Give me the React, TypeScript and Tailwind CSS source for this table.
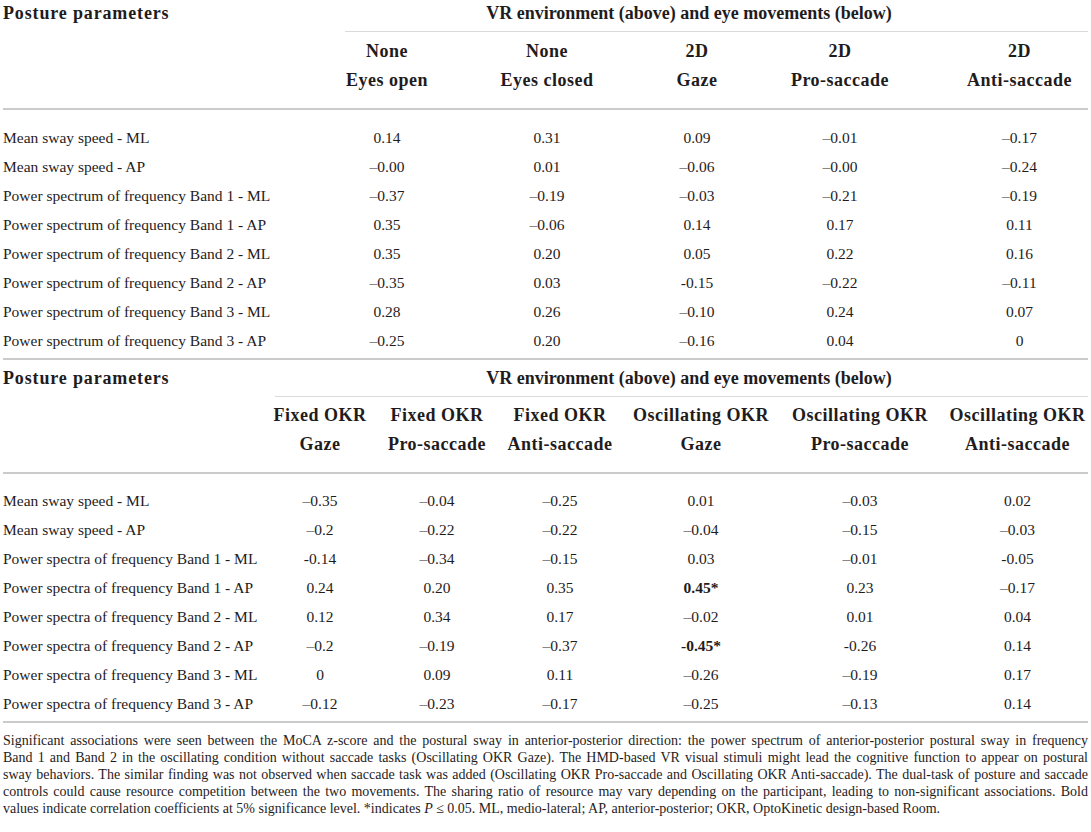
import React from "react";

type Cell = { v: string; b?: boolean };

const t1Cols = [
  ["None", "Eyes open"],
  ["None", "Eyes closed"],
  ["2D", "Gaze"],
  ["2D", "Pro-saccade"],
  ["2D", "Anti-saccade"],
];

const t1Rows: [string, string[]][] = [
  ["Mean sway speed - ML", ["0.14", "0.31", "0.09", "–0.01", "–0.17"]],
  ["Mean sway speed - AP", ["–0.00", "0.01", "–0.06", "–0.00", "–0.24"]],
  ["Power spectrum of frequency Band 1 - ML", ["–0.37", "–0.19", "–0.03", "–0.21", "–0.19"]],
  ["Power spectrum of frequency Band 1 - AP", ["0.35", "–0.06", "0.14", "0.17", "0.11"]],
  ["Power spectrum of frequency Band 2 - ML", ["0.35", "0.20", "0.05", "0.22", "0.16"]],
  ["Power spectrum of frequency Band 2 - AP", ["–0.35", "0.03", "-0.15", "–0.22", "–0.11"]],
  ["Power spectrum of frequency Band 3 - ML", ["0.28", "0.26", "–0.10", "0.24", "0.07"]],
  ["Power spectrum of frequency Band 3 - AP", ["–0.25", "0.20", "–0.16", "0.04", "0"]],
];

const t2Cols = [
  ["Fixed OKR", "Gaze"],
  ["Fixed OKR", "Pro-saccade"],
  ["Fixed OKR", "Anti-saccade"],
  ["Oscillating OKR", "Gaze"],
  ["Oscillating OKR", "Pro-saccade"],
  ["Oscillating OKR", "Anti-saccade"],
];

const t2Rows: [string, Cell[]][] = [
  ["Mean sway speed - ML", [{ v: "–0.35" }, { v: "–0.04" }, { v: "–0.25" }, { v: "0.01" }, { v: "–0.03" }, { v: "0.02" }]],
  ["Mean sway speed - AP", [{ v: "–0.2" }, { v: "–0.22" }, { v: "–0.22" }, { v: "–0.04" }, { v: "–0.15" }, { v: "–0.03" }]],
  ["Power spectra of frequency Band 1 - ML", [{ v: "-0.14" }, { v: "–0.34" }, { v: "–0.15" }, { v: "0.03" }, { v: "–0.01" }, { v: "-0.05" }]],
  ["Power spectra of frequency Band 1 - AP", [{ v: "0.24" }, { v: "0.20" }, { v: "0.35" }, { v: "0.45*", b: true }, { v: "0.23" }, { v: "–0.17" }]],
  ["Power spectra of frequency Band 2 - ML", [{ v: "0.12" }, { v: "0.34" }, { v: "0.17" }, { v: "–0.02" }, { v: "0.01" }, { v: "0.04" }]],
  ["Power spectra of frequency Band 2 - AP", [{ v: "–0.2" }, { v: "–0.19" }, { v: "–0.37" }, { v: "-0.45*", b: true }, { v: "-0.26" }, { v: "0.14" }]],
  ["Power spectra of frequency Band 3 - ML", [{ v: "0" }, { v: "0.09" }, { v: "0.11" }, { v: "–0.26" }, { v: "–0.19" }, { v: "0.17" }]],
  ["Power spectra of frequency Band 3 - AP", [{ v: "–0.12" }, { v: "–0.23" }, { v: "–0.17" }, { v: "–0.25" }, { v: "–0.13" }, { v: "0.14" }]],
];

function TitleRow({ lineOffset }: { lineOffset: "t1" | "t2" }) {
  return (
    <div>
      <div className="flex h-[31px] items-start">
        <div className="w-[287px] text-[18px] leading-[26px] font-bold tracking-[0.85px] whitespace-nowrap">
          Posture parameters
        </div>
        <div className="flex-1 text-center text-[18px] leading-[26px] font-bold whitespace-nowrap">
          VR environment (above) and eye movements (below)
        </div>
      </div>
      <div
        className={
          lineOffset === "t1"
            ? "ml-[342px] border-t border-[#dadada]"
            : "ml-[272px] border-t border-[#dadada]"
        }
      />
    </div>
  );
}

function HeadCell({ lines }: { lines: string[] }) {
  return (
    <div className="flex flex-col items-center text-[18px] leading-[29px] font-bold tracking-[0.5px] whitespace-nowrap">
      <div>{lines[0]}</div>
      <div>{lines[1]}</div>
    </div>
  );
}

export default function App() {
  return (
    <div
      className="w-[1091px] h-[832px] bg-white px-[3px] text-[#1f1c1d] overflow-hidden"
      style={{ fontFamily: '"Liberation Serif", "Times New Roman", serif' }}
    >
      {/* Table 1 */}
      <TitleRow lineOffset="t1" />
      <div className="grid grid-cols-[342px_84px_236px_64px_222px_1fr] pt-[5px] pb-[13px] border-b-2 border-[#cbcbcb]">
        <div />
        {t1Cols.map((c, i) => (
          <HeadCell key={i} lines={c} />
        ))}
      </div>
      <div className="pt-[13px] pb-[3px] border-b-2 border-[#cbcbcb]">
        {t1Rows.map(([label, vals], r) => (
          <div
            key={r}
            className="grid grid-cols-[342px_84px_236px_64px_222px_1fr] text-[15.5px] leading-[29px]"
          >
            <div className="whitespace-nowrap">{label}</div>
            {vals.map((v, i) => (
              <div key={i} className="text-center whitespace-nowrap">
                {v}
              </div>
            ))}
          </div>
        ))}
      </div>

      {/* Table 2 */}
      <div className="pt-[5px]">
        <TitleRow lineOffset="t2" />
      </div>
      <div className="grid grid-cols-[254px_126px_108px_138px_144px_174px_1fr] pt-[4px] pb-[13px] border-b-2 border-[#cbcbcb]">
        <div />
        {t2Cols.map((c, i) => (
          <HeadCell key={i} lines={c} />
        ))}
      </div>
      <div className="pt-[12px] pb-[3px] border-b-2 border-[#cbcbcb]">
        {t2Rows.map(([label, vals], r) => (
          <div
            key={r}
            className="grid grid-cols-[254px_126px_108px_138px_144px_174px_1fr] text-[15.5px] leading-[29px]"
          >
            <div className="whitespace-nowrap">{label}</div>
            {vals.map((c, i) => (
              <div
                key={i}
                className={c.b ? "text-center whitespace-nowrap font-bold" : "text-center whitespace-nowrap"}
              >
                {c.v}
              </div>
            ))}
          </div>
        ))}
      </div>

      {/* Footnote */}
      <div className="pt-[9px] text-[14px] leading-[17px]">
        <p className="text-justify [text-align-last:justify] whitespace-nowrap">
          Significant associations were seen between the MoCA z-score and the postural sway in anterior-posterior direction: the power spectrum of anterior-posterior postural sway in frequency
        </p>
        <p className="text-justify [text-align-last:justify] whitespace-nowrap">
          Band 1 and Band 2 in the oscillating condition without saccade tasks (Oscillating OKR Gaze). The HMD-based VR visual stimuli might lead the cognitive function to appear on postural
        </p>
        <p className="text-justify [text-align-last:justify] whitespace-nowrap">
          sway behaviors. The similar finding was not observed when saccade task was added (Oscillating OKR Pro-saccade and Oscillating OKR Anti-saccade). The dual-task of posture and saccade
        </p>
        <p className="text-justify [text-align-last:justify] whitespace-nowrap">
          controls could cause resource competition between the two movements. The sharing ratio of resource may vary depending on the participant, leading to non-significant associations. Bold
        </p>
        <p className="whitespace-nowrap">
          values indicate correlation coefficients at 5% significance level. *indicates <i>P</i> ≤ 0.05. ML, medio-lateral; AP, anterior-posterior; OKR, OptoKinetic design-based Room.
        </p>
      </div>
    </div>
  );
}
